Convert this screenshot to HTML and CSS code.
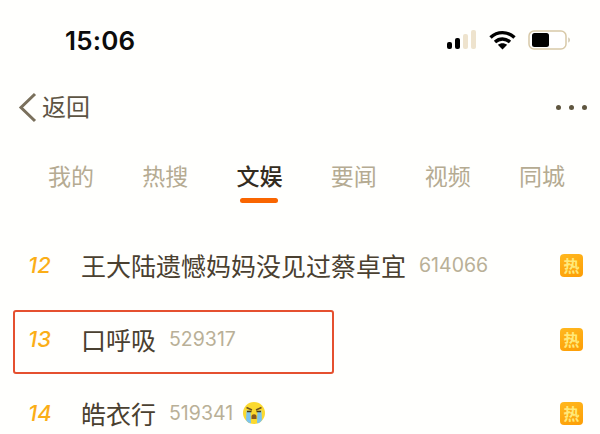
FILE: index.html
```html
<!DOCTYPE html>
<html lang="zh-CN">
<head>
    <meta charset="UTF-8">
    <meta name="viewport" content="width=device-width, initial-scale=1.0">
    <title>热搜榜</title>
    <link rel="stylesheet" href="styles.css">
</head>
<body>
    <div class="status-bar">
        <span class="time">15:06</span>
        <div class="status-icons">
            <svg class="signal" width="30" height="20" viewBox="0 0 30 20">
                <rect x="0" y="12" width="5" height="7" rx="2" fill="#000"/>
                <rect x="8" y="8" width="5" height="11" rx="2" fill="#000"/>
                <rect x="16" y="4" width="5" height="15" rx="2" fill="#eee3cd"/>
                <rect x="24" y="0" width="5" height="19" rx="2" fill="#eee3cd"/>
            </svg>
            <svg class="wifi" width="27" height="20" viewBox="0 0 27 20">
                <path d="M1.5 7.5C8.500 1 18.500 1 25.500 7.500" fill="none" stroke="#000" stroke-width="3.400"/>
                <path d="M6 12C10.500 8 16.500 8 21 12" fill="none" stroke="#000" stroke-width="3.400"/>
                <path d="M13.500 19.500L8.800 14.800C11.500 12.600 15.500 12.600 18.200 14.800Z" fill="#000"/>
            </svg>
            <svg class="battery" width="44" height="20" viewBox="0 0 44 20">
                <rect x="1" y="1" width="37" height="18" rx="5" fill="#fff" stroke="#d8c9a8" stroke-width="1.500"/>
                <rect x="4" y="3" width="17" height="14" rx="2.500" fill="#000"/>
                <path d="M40.500 7.500C42 8 42 12 40.500 12.500Z" fill="#b9aa8a"/>
            </svg>
        </div>
    </div>

    <div class="nav-bar">
        <svg class="back-icon" width="19" height="31" viewBox="0 0 19 31">
            <path d="M17 2L3 15.500L17 29" fill="none" stroke="#7a705c" stroke-width="3"/>
        </svg>
        <span class="back-label">返回</span>
        <div class="more">
            <i></i><i></i><i></i>
        </div>
    </div>

    <div class="tabs">
        <div class="tab">我的</div>
        <div class="tab">热搜</div>
        <div class="tab active">文娱</div>
        <div class="tab">要闻</div>
        <div class="tab">视频</div>
        <div class="tab">同城</div>
    </div>

    <div class="list">
        <div class="row">
            <span class="rank">12</span>
            <span class="title">王大陆遗憾妈妈没见过蔡卓宜</span>
            <span class="count">614066</span>
            <span class="hot">热</span>
        </div>
        <div class="row">
            <span class="rank">13</span>
            <span class="title">口呼吸</span>
            <span class="count">529317</span>
            <span class="hot">热</span>
            <div class="highlight"></div>
        </div>
        <div class="row">
            <span class="rank">14</span>
            <span class="title">皓衣行</span>
            <span class="count">519341</span>
            <svg class="emoji" width="22" height="22" viewBox="0 0 22 22">
                <circle cx="11" cy="11" r="11" fill="#fbd92f"/>
                <path d="M3.500 8.500L3 18C5 21 7 21.500 8 21L7.500 9Z" fill="#7cc4ee"/>
                <path d="M18.500 8.500L19 18C17 21 15 21.500 14 21L14.500 9Z" fill="#7cc4ee"/>
                <path d="M3.500 5.500L9 8M18.500 5.500L13 8" fill="none" stroke="#6e5320" stroke-width="1.500"/>
                <path d="M4 9.500H8.500M13.500 9.500H18" fill="none" stroke="#4a3a1a" stroke-width="1.600"/>
                <path d="M8.500 17V14.500C8.500 11.500 13.500 11.500 13.500 14.500V17Z" fill="#8a5a1e"/>
            </svg>
            <span class="hot">热</span>
        </div>
    </div>
</body>
</html>
```

FILE: styles.css
```css
/* page */
body {
    margin: 0;
    width: 600px;
    height: 434px;
    overflow: hidden;
    background-color: #fffffd;
    font-family: "Noto Sans CJK SC", "Liberation Sans", sans-serif;
    color: #4a4030;
}

/* status bar */
.status-bar {
    display: flex;
    justify-content: space-between;
    align-items: center;
    height: 40px;
    padding: 20px 28px 0 65px;
}

.time {
    font-family: Inter, "Liberation Sans", sans-serif;
    font-size: 26px;
    font-weight: 600;
    letter-spacing: 0.2px;
    color: #0c0c0c;
}

.status-icons {
    display: flex;
    align-items: center;
    gap: 12px;
}

/* nav bar */
.nav-bar {
    display: flex;
    align-items: center;
    height: 50px;
    padding: 22px 13px 0 18px;
}

.back-icon {
    margin-right: 5px;
}

.back-label {
    margin-bottom: 3px;
    font-size: 24px;
    color: #5d5443;
}

.more {
    display: flex;
    gap: 8px;
    margin-left: auto;
}

.more i {
    width: 5px;
    height: 5px;
    border-radius: 50%;
    background-color: #5f563f;
}

/* tabs */
.tabs {
    display: flex;
    height: 58px;
    padding: 23px 0 0 24px;
}

.tab {
    position: relative;
    width: 94.2px;
    height: 40px;
    line-height: 40px;
    text-align: center;
    font-size: 23px;
    color: #b5ab92;
}

.tab.active {
    color: #332c20;
    font-weight: 500;
}

.tab.active::after {
    content: "";
    position: absolute;
    left: 28px;
    bottom: -8px;
    width: 38px;
    height: 5px;
    border-radius: 3px;
    background-color: #f96500;
}

/* list */
.list {
    padding-top: 15px;
}

.row {
    position: relative;
    display: flex;
    align-items: center;
    height: 74px;
    padding: 0 17px 0 28px;
}

.rank {
    width: 53px;
    font-family: Inter, "Liberation Sans", sans-serif;
    font-size: 22px;
    font-weight: 500;
    font-style: italic;
    color: #fbae17;
}

.title {
    font-size: 25px;
    color: #4a4030;
}

.count {
    margin-left: 13px;
    font-family: Inter, "Liberation Sans", sans-serif;
    font-size: 19.500px;
    color: #b9b097;
}

.emoji {
    margin-left: 10px;
}

.hot {
    width: 23px;
    height: 23px;
    line-height: 22px;
    margin-left: auto;
    text-align: center;
    font-size: 16px;
    font-weight: 700;
    color: #ffe97a;
    border-radius: 4px;
    background: linear-gradient(160deg, #ffb81f, #fd9d05);
}

/* red box drawn over the row */
.highlight {
    position: absolute;
    left: 13px;
    top: 8px;
    width: 317px;
    height: 60px;
    border: 2px solid #e5502f;
    border-radius: 3px;
}
```
